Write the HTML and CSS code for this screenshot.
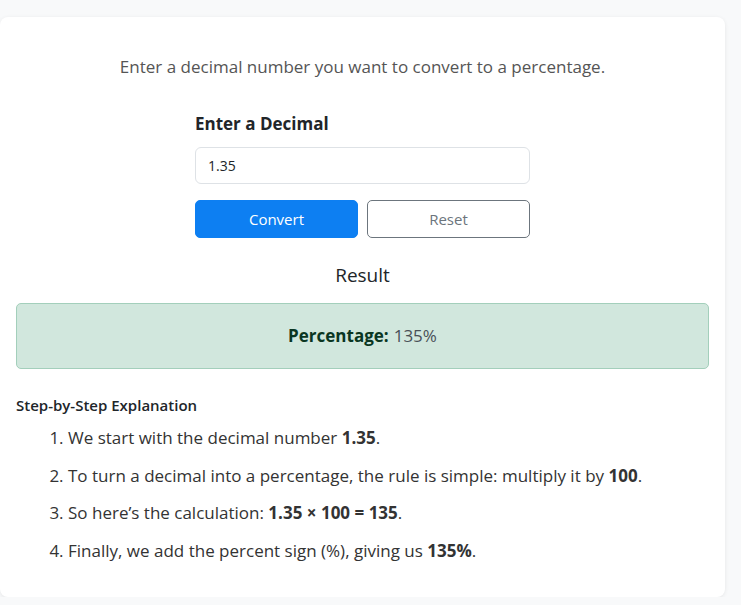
FILE: index.html
```html
<!DOCTYPE html>
<html lang="en">

<head>
    <meta charset="UTF-8">
    <meta name="viewport" content="width=device-width, initial-scale=1.0">
    <title>Decimal to Percentage Converter</title>
    <link rel="stylesheet" href="styles.css">
</head>

<body>
    <article class="card">
        <p class="intro">Enter a decimal number you want to convert to a percentage.</p>
        <form class="converter">
            <label class="field-label" for="decimal">Enter a Decimal</label>
            <input class="field" id="decimal" type="text" value="1.35">
            <div class="actions">
                <button type="button" class="btn btn-primary">Convert</button>
                <button type="reset" class="btn btn-outline">Reset</button>
            </div>
        </form>
        <h3 class="result-title">Result</h3>
        <div class="alert">
            <strong>Percentage:</strong> 135%
        </div>
        <section class="steps">
            <h6>Step-by-Step Explanation</h6>
            <ol>
                <li>We start with the decimal number <strong>1.35</strong>.</li>
                <li>To turn a decimal into a percentage, the rule is simple: multiply it by <strong>100</strong>.</li>
                <li>So here’s the calculation: <strong>1.35 × 100 = 135</strong>.</li>
                <li>Finally, we add the percent sign (%), giving us <strong>135%</strong>.</li>
            </ol>
        </section>
    </article>
</body>

</html>
```

FILE: styles.css
```css
body {
    background: #f8f9fa;
    color: #212529;
    font-family: "Open Sans", "Noto Sans", Arial, sans-serif;
    font-size: 16px;
    line-height: 1.5;
    margin: 0;
}

.card {
    box-sizing: border-box;
    width: 725px;
    height: 580px;
    margin-top: 17px;
    padding: 16px;
    background: #fff;
    border-radius: 8px;
    box-shadow: 0 1px 4px rgba(0, 0, 0, 0.08);
}

.intro {
    margin: 21px 0 0;
    text-align: center;
    color: #555;
    font-size: 17px;
}

.converter {
    width: 335px;
    margin: 0 auto;
    padding-top: 31px;
}

.field-label {
    display: block;
    font-size: 17px;
    font-weight: 700;
    margin-bottom: 11px;
}

.field {
    box-sizing: border-box;
    display: block;
    width: 100%;
    height: 37px;
    padding: 0 12px;
    border: 1px solid #dee2e6;
    border-radius: 6px;
    font-family: inherit;
    font-size: 14px;
    color: #212529;
}

.actions {
    display: flex;
    gap: 9px;
    margin-top: 16px;
}

.btn {
    flex: 1;
    height: 38px;
    border-radius: 5px;
    font-family: inherit;
    font-size: 15px;
}

.btn-primary {
    background: #0d7ff2;
    border: 1px solid #0d7ff2;
    color: #fff;
}

.btn-outline {
    background: #fff;
    border: 1px solid #6c757d;
    color: #6c757d;
}

.result-title {
    margin: 23px 0 13px;
    text-align: center;
    font-size: 19px;
    font-weight: 500;
}

.alert {
    height: 66px;
    box-sizing: border-box;
    display: flex;
    align-items: center;
    justify-content: center;
    background: #d1e7dd;
    border: 1px solid #a3cfbb;
    border-radius: 5px;
    color: #495057;
    font-size: 17px;
}

.alert strong {
    color: #0a3622;
    margin-right: 5px;
}

.steps h6 {
    margin: 25px 0 9px;
    font-size: 15px;
    font-weight: 600;
    color: #212529;
}

.steps ol {
    margin: 0;
    padding-left: 52px;
    color: #333;
    font-size: 17px;
}

.steps li {
    margin-bottom: 12px;
}
```
